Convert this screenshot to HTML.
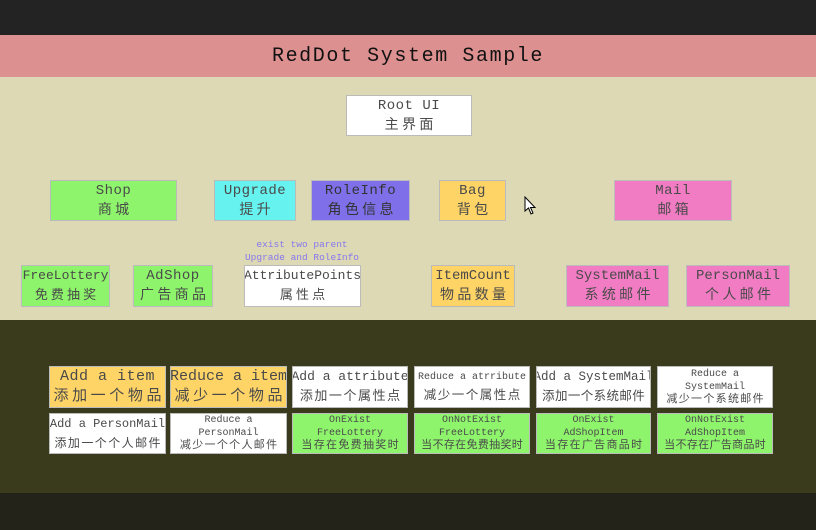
<!DOCTYPE html>
<html><head><meta charset="utf-8"><style>
*{margin:0;padding:0;box-sizing:border-box}
body{width:816px;height:530px;overflow:hidden;background:#dcd9b4;position:relative;font-family:"Liberation Mono","Noto Sans CJK SC",monospace;color:#4a4a4a}
.bar{position:absolute;left:0;width:816px}
.b{position:absolute;display:flex;flex-direction:column;align-items:center;justify-content:center;text-align:center;border:1px solid #bbb;line-height:20px;font-size:14px;white-space:nowrap;overflow:hidden;letter-spacing:0.5px}
.b div:last-child{letter-spacing:.24em;margin-right:-.24em}
.b div.t{letter-spacing:.12em;margin-right:-.12em}
.b div.n{letter-spacing:.03em;margin-right:-.03em}
.s{font-size:11px;line-height:14px;letter-spacing:0}
.w{background:#fff}.g{background:#8ef46c}.y{background:#ffd466}.p{background:#f27cc4}
</style></head><body>
<div class="bar" style="top:0;height:35px;background:#232323"></div>
<div class="bar" style="top:35px;height:42px;background:#dc9090;display:flex;align-items:center;justify-content:center;font-size:20px;color:#111;letter-spacing:1.6px">RedDot System Sample</div>
<div class="bar" style="top:320px;height:173px;background:#3a3a1c"></div>
<div class="bar" style="top:493px;height:37px;background:#23231a"></div>

<div class="b w" style="left:346px;top:95px;width:126px;height:41px"><div>Root UI</div><div>主界面</div></div>
<div class="b g" style="left:50px;top:180px;width:127px;height:41px"><div>Shop</div><div>商城</div></div>
<div class="b" style="left:214px;top:180px;width:82px;height:41px;background:#66f2ee"><div>Upgrade</div><div>提升</div></div>
<div class="b" style="left:311px;top:180px;width:99px;height:41px;background:#7f70ea;color:#333"><div>RoleInfo</div><div>角色信息</div></div>
<div class="b y" style="left:439px;top:180px;width:67px;height:41px"><div>Bag</div><div>背包</div></div>
<div class="b p" style="left:614px;top:180px;width:118px;height:41px"><div>Mail</div><div>邮箱</div></div>
<svg style="position:absolute;left:524px;top:196px" width="14" height="20" viewBox="0 0 14 20"><path d="M1 1 L1 15 L4.5 12 L7 18 L9 17 L6.5 11.5 L11 11.5 Z" fill="#fff" stroke="#000" stroke-width="1"/></svg>

<div style="position:absolute;left:232px;top:238px;width:140px;text-align:center;font-size:9.5px;line-height:13px;color:#8877ee">exist two parent<br>Upgrade and RoleInfo</div>

<div class="b g" style="left:21px;top:265px;width:89px;height:42px;letter-spacing:0;font-size:13px"><div>FreeLottery</div><div>免费抽奖</div></div>
<div class="b g" style="left:133px;top:265px;width:80px;height:42px"><div>AdShop</div><div>广告商品</div></div>
<div class="b w" style="left:244px;top:265px;width:117px;height:42px;font-size:13px;letter-spacing:0"><div>AttributePoints</div><div>属性点</div></div>
<div class="b y" style="left:431px;top:265px;width:84px;height:42px;letter-spacing:0"><div>ItemCount</div><div>物品数量</div></div>
<div class="b p" style="left:566px;top:265px;width:103px;height:42px;letter-spacing:0"><div>SystemMail</div><div>系统邮件</div></div>
<div class="b p" style="left:686px;top:265px;width:104px;height:42px;letter-spacing:0"><div>PersonMail</div><div>个人邮件</div></div>

<div class="b y" style="left:49px;top:366px;width:117px;height:42px;font-size:15px"><div>Add a item</div><div>添加一个物品</div></div>
<div class="b y" style="left:170px;top:366px;width:117px;height:42px;font-size:15px;letter-spacing:0"><div>Reduce a item</div><div>减少一个物品</div></div>
<div class="b w" style="left:292px;top:366px;width:116px;height:42px;font-size:13px;letter-spacing:0"><div>Add a attribute</div><div class="t">添加一个属性点</div></div>
<div class="b w" style="left:414px;top:366px;width:116px;height:42px;font-size:10px;line-height:18px;letter-spacing:0"><div>Reduce a atrribute</div><div class="t" style="font-size:12.5px">减少一个属性点</div></div>
<div class="b w" style="left:536px;top:366px;width:115px;height:42px;font-size:12.5px;letter-spacing:0"><div>Add a SystemMail</div><div class="n">添加一个系统邮件</div></div>
<div class="b w s" style="left:657px;top:366px;width:116px;height:42px;font-size:10px;line-height:13px"><div>Reduce a</div><div>SystemMail</div><div class="t" style="font-size:11px">减少一个系统邮件</div></div>

<div class="b w" style="left:49px;top:413px;width:117px;height:41px;font-size:12px;letter-spacing:0"><div>Add a PersonMail</div><div class="t">添加一个个人邮件</div></div>
<div class="b w s" style="left:170px;top:413px;width:117px;height:41px;font-size:10px;line-height:13px"><div>Reduce a</div><div>PersonMail</div><div class="t" style="font-size:11px">减少一个个人邮件</div></div>
<div class="b g s" style="left:292px;top:413px;width:116px;height:41px;font-size:10px;line-height:13px"><div>OnExist</div><div>FreeLottery</div><div class="t" style="font-size:11px">当存在免费抽奖时</div></div>
<div class="b g s" style="left:414px;top:413px;width:116px;height:41px;font-size:10px;line-height:13px"><div>OnNotExist</div><div>FreeLottery</div><div class="n" style="font-size:11px">当不存在免费抽奖时</div></div>
<div class="b g s" style="left:536px;top:413px;width:115px;height:41px;font-size:10px;line-height:13px"><div>OnExist</div><div>AdShopItem</div><div class="t" style="font-size:11px">当存在广告商品时</div></div>
<div class="b g s" style="left:657px;top:413px;width:116px;height:41px;font-size:10px;line-height:13px"><div>OnNotExist</div><div>AdShopItem</div><div class="n" style="font-size:11px">当不存在广告商品时</div></div>
</body></html>
